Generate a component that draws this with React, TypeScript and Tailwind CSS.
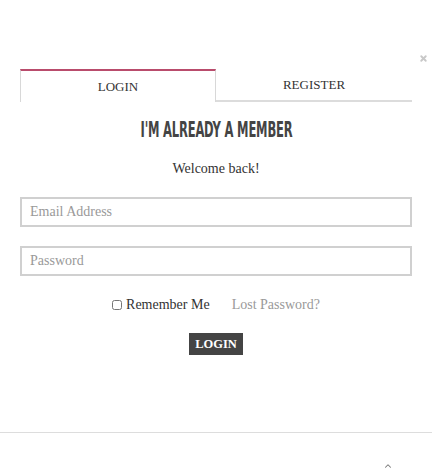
import { ChevronUp, X } from "lucide-react";

const serif = "font-['Liberation_Serif',serif]";

export default function App() {
  return (
    <div className={`relative h-[472px] w-[432px] overflow-hidden bg-white ${serif} text-[#333]`}>
      {/* close */}
      <button className="absolute right-[4px] top-[54px] text-[#c8c8c8]">
        <X className="h-[9px] w-[9px]" strokeWidth={5} />
      </button>

      <div className="px-[20px] pt-[69px]">
        {/* Tabs */}
        <div className="flex">
          <div className="flex h-[33px] w-[196px] items-center justify-center border-x border-t-2 border-x-[#d8d8d8] border-t-[#b94c6c] pt-[1px] text-[13px]">
            LOGIN
          </div>
          <div className="flex h-[33px] flex-1 items-center justify-center border-b-2 border-[#dcdcdc] pt-[1px] text-[13px]">
            REGISTER
          </div>
        </div>

        <div className="mt-[17px] flex justify-center">
          <h2 className="scale-x-[0.61] whitespace-nowrap font-['DejaVu_Sans_Condensed',sans-serif] text-[21px] font-bold leading-[22px] tracking-[-0.3px] text-[#444]">
            I'M ALREADY A MEMBER
          </h2>
        </div>
        <p className="mt-[19px] text-center text-[14px] leading-[18px]">Welcome back!</p>

        <input
          type="text"
          placeholder="Email Address"
          className="mt-[19px] block h-[30px] w-full border-2 border-[#d0d0d0] px-[8px] text-[14px] outline-none placeholder:text-[#999]"
        />
        <input
          type="password"
          placeholder="Password"
          className="mt-[19px] block h-[30px] w-full border-2 border-[#d0d0d0] px-[8px] text-[14px] outline-none placeholder:text-[#999]"
        />

        <div className="mt-[20px] flex items-center justify-center text-[14px] leading-[18px]">
          <label className="flex items-center gap-[4px]">
            <input type="checkbox" className="h-[10px] w-[10px] rounded-[2px]" />
            <span>Remember Me</span>
          </label>
          <a className="ml-[22px] text-[#999]">Lost Password?</a>
        </div>

        <div className="mt-[19px] flex justify-center">
          <button className="h-[22px] bg-[#444] px-[6px] text-[12.5px] font-bold text-white">LOGIN</button>
        </div>
      </div>

      <div className="mt-[77px] border-t border-[#ddd]" />
      <ChevronUp className="absolute left-[383px] top-[461px] h-[10px] w-[10px] text-[#777]" strokeWidth={2.5} />
    </div>
  );
}
